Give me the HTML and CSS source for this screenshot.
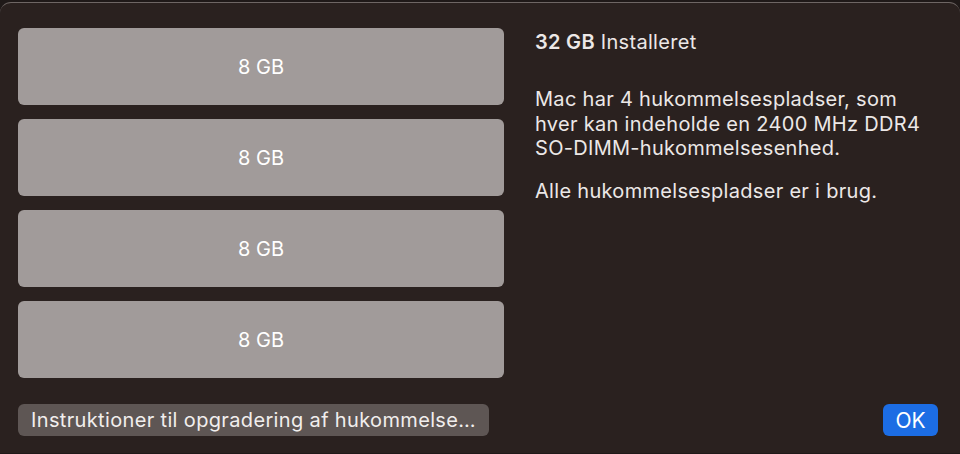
FILE: index.html
```html
<!DOCTYPE html>
<html lang="da">
<head>
<meta charset="utf-8">
<title>Hukommelse</title>
<link rel="stylesheet" href="styles.css">
</head>
<body>
<div class="window">
  <div class="main">
    <div class="slots">
      <div class="slot">8 GB</div>
      <div class="slot">8 GB</div>
      <div class="slot">8 GB</div>
      <div class="slot">8 GB</div>
    </div>
    <div class="info">
      <p class="installed"><b>32 GB</b> Installeret</p>
      <p class="desc">Mac har 4 hukommelsespladser, som<br>hver kan indeholde en 2400 MHz DDR4<br>SO-DIMM-hukommelsesenhed.</p>
      <p class="desc">Alle hukommelsespladser er i brug.</p>
    </div>
  </div>
  <div class="footer">
    <button class="btn btn-gray">Instruktioner til opgradering af hukommelse…</button>
    <button class="btn btn-blue">OK</button>
  </div>
</div>
</body>
</html>
```

FILE: styles.css
```css
html, body {
  margin: 0;
  padding: 0;
  width: 960px;
  height: 454px;
  overflow: hidden;
  background: #1f1918;
  font-family: Inter, "Noto Sans", "Liberation Sans", sans-serif;
}
.window {
  margin-top: 2px;
  height: 451px;
  box-sizing: border-box;
  background: #2a211f;
  border-top: 1px solid #6e6664;
  border-radius: 11px 11px 0 0;
  padding: 25px 22px 0 18px;
  display: flex;
  flex-direction: column;
}
.main {
  display: flex;
  gap: 31px;
}
.slots {
  width: 486px;
  display: flex;
  flex-direction: column;
  gap: 14px;
}
.slot {
  height: 77px;
  background: #a19b9a;
  border-radius: 6px;
  display: flex;
  align-items: center;
  justify-content: center;
  color: #ffffff;
  font-size: 20px;
}
.info {
  color: #ece8e7;
  font-size: 20px;
  letter-spacing: 0.3px;
  line-height: 24.5px;
  white-space: nowrap;
}
.info p { margin: 0; }
.installed {
  margin-top: 3px !important;
  line-height: 23px;
}
.installed b { font-weight: 600; }
.desc {
  margin-top: 33px !important;
}
.desc + .desc {
  margin-top: 18px !important;
}
.footer {
  margin-top: 26px;
  display: flex;
  justify-content: space-between;
  align-items: center;
}
.btn {
  font-family: inherit;
  font-size: 20px;
  letter-spacing: 0.35px;
  height: 32px;
  border: none;
  border-radius: 6px;
  color: #f1eeed;
  padding: 0 13px;
}
.btn-gray {
  width: 471px;
  background: #5e5654;
  text-align: left;
}
.btn-blue {
  width: 55px;
  background: #1c6de4;
  color: #ffffff;
  font-size: 21px;
  letter-spacing: 0;
  padding: 0;
}
```
